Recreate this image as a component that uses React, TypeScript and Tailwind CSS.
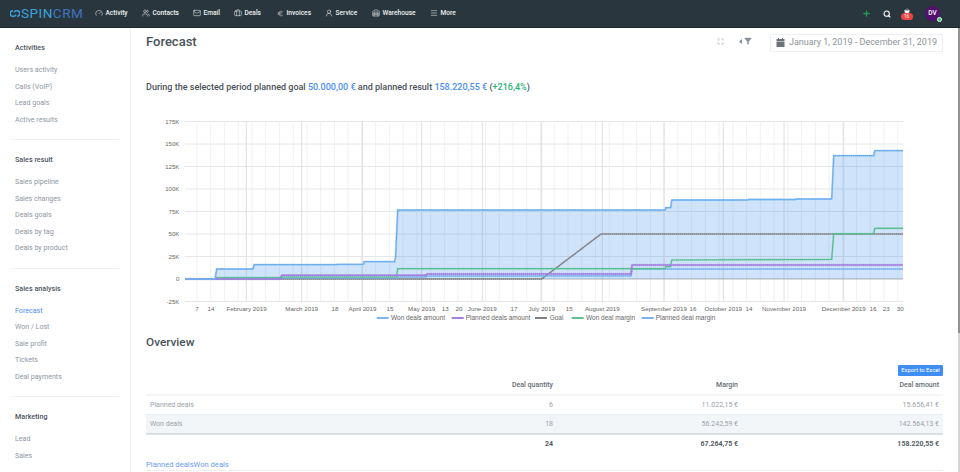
import React from "react";
import { Gauge, Users, Mail, Briefcase, Euro, UserRound, Warehouse, Menu, Plus, Search, ShoppingBasket, Maximize, Filter } from "lucide-react";

const X0 = 185;
const X1 = 903;
const TOP = 121.5;
const STEP = 22.5;

type P = [number, number];
const won: P[] = [[185,279],[215,279],[216.7,269],[252.7,269],[254.3,264.7],[336.7,264.7],[337,264.3],[363.3,264.3],[364.3,261.7],[394.5,261.7],[395.5,258],[397.7,210],[665,210],[666,207.7],[670.7,207.7],[671.7,200],[748,200],[748.5,199.5],[795,199.5],[795.5,199],[831.7,199],[833.7,155.7],[873.7,155.7],[874.7,150.7],[903,150.7]];
const margin: P[] = [[185,279],[216,279],[217,277.6],[281,277.6],[281.5,277],[396.5,277],[397.7,268.7],[665,268.7],[666,266.6],[670.7,266.6],[671.7,260],[831.7,259.5],[833.7,233.7],[873.7,233.7],[874.7,228.3],[903,228.3]];
const planned: P[] = [[185,279],[281,279],[281.5,275.3],[426,275.3],[426.7,274],[631,274],[632,265],[903,265]];
const plannedMargin: P[] = [[185,279],[281,279],[281.5,278],[397,278],[397.5,277],[426,277],[426.7,276],[631,276],[632,269],[903,269]];
const goal: P[] = [[185,279],[541.7,279],[601,234],[903,234]];

const pts = (p: P[]) => p.map((a) => a.join(",")).join(" ");
const months = [246.3, 301.7, 362.3, 421.7, 482.3, 541.7, 602.3, 664, 723.3, 784, 843.7];
const weeks = Array.from({ length: 52 }, (_, i) => 197 + i * 13.74);
const yLabels = ["175K", "150K", "125K", "100K", "75K", "50K", "25K", "0", "-25K"];
const xLabels: [string, number][] = [["7",197],["14",211],["February 2019",246.5],["March 2019",301.7],["18",335],["April 2019",362.5],["15",390],["May 2019",421.7],["13",445.3],["20",459],["June 2019",482.3],["17",514],["July 2019",541.7],["15",569.3],["August 2019",602.3],["September 2019",664],["16",693],["October 2019",723.3],["14",749],["November 2019",784],["December 2019",843.7],["16",873],["23",886.3],["30",900.3]];
const legend: [string, string, number, number][] = [["Won deals amount","#7ab6ee",376.7,391],["Planned deals amount","#a47fe0",451.7,465.7],["Goal","#808080",535,549.7],["Won deal margin","#5cc296",571.7,586],["Planned deal margin","#7ab6ee",641.7,655.7]];

function Series({ p, c, w }: { p: P[]; c: string; w: number }) {
  return (
    <g fill="none" stroke={c}>
      <polyline points={pts(p)} strokeWidth={w * 0.7} />
      <polyline points={pts(p)} strokeWidth={w * 1.15} strokeDasharray="1 1" strokeOpacity="0.6" />
    </g>
  );
}

function Chart() {
  const chartFont = { fontFamily: '"Liberation Sans", Arial, sans-serif' };
  return (
    <svg width="956" height="220" viewBox="0 110 956 220" className="block absolute left-0 top-[110px]" style={chartFont}>
      {weeks.filter((x) => x < X1).map((x) => (
        <line key={x} x1={x} x2={x} y1={TOP} y2={TOP + STEP * 8} stroke="#f1f1f1" strokeWidth="1" />
      ))}
      {months.map((x) => (
        <line key={x} x1={x} x2={x} y1={TOP} y2={TOP + STEP * 8} stroke="#dedede" strokeWidth="1" />
      ))}
      {yLabels.map((l, i) => (
        <g key={l}>
          <line x1={X0} x2={X1} y1={TOP + i * STEP} y2={TOP + i * STEP} stroke={l === "0" ? "#b0b0b0" : "#e6e6e6"} strokeWidth="1" />
          <text x={179.3} y={TOP + i * STEP + 2.2} textAnchor="end" fontSize="6" fill="#666666">{l}</text>
        </g>
      ))}
      {xLabels.map(([l, x], i) => (
        <text key={i} x={x} y={310.5} textAnchor="middle" fontSize="6.2" fill="#666666">{l}</text>
      ))}
      <polygon points={`${pts(won)} 903,279`} fill="#2f86e8" fillOpacity="0.23" />
      <Series p={goal} c="#7d7d7d" w={1.6} />
      <Series p={plannedMargin} c="#6aaeea" w={1.7} />
      <Series p={margin} c="#56bf90" w={1.7} />
      <Series p={planned} c="#a47fe0" w={2.1} />
      <Series p={won} c="#6fb0ee" w={1.9} />
      {legend.map(([l, c, lx, tx]) => (
        <g key={l}>
          <line x1={lx} x2={lx + 12} y1={318} y2={318} stroke={c} strokeWidth="2" />
          <text x={tx} y={320} fontSize="6.5" fill="#666666">{l}</text>
        </g>
      ))}
    </svg>
  );
}

const nav: [React.ElementType, string, string, number][] = [
  [Gauge, "Activity", "w-[47px]", 8],
  [Users, "Contacts", "w-[51px]", 8],
  [Mail, "Email", "w-[41px]", 8],
  [Briefcase, "Deals", "w-[43px]", 8],
  [Euro, "Invoices", "w-[48px]", 7],
  [UserRound, "Service", "w-[47px]", 8],
  [Warehouse, "Warehouse", "w-[58px]", 8],
  [Menu, "More", "w-[30px]", 8],
];

const side: { title: string; items: string[] }[] = [
  { title: "Activities", items: ["Users activity", "Calls (VoIP)", "Lead goals", "Active results"] },
  { title: "Sales result", items: ["Sales pipeline", "Sales changes", "Deals goals", "Deals by tag", "Deals by product"] },
  { title: "Sales analysis", items: ["Forecast", "Won / Lost", "Sale profit", "Tickets", "Deal payments"] },
  { title: "Marketing", items: ["Lead", "Sales"] },
];

const rows = [
  ["Planned deals", "6", "11.022,15 €", "15.656,41 €"],
  ["Won deals", "18", "56.242,59 €", "142.564,13 €"],
];

export default function App() {
  return (
    <div className="relative w-[960px] h-[472px] overflow-hidden bg-white font-['Roboto',sans-serif] flex flex-col">
      <header className="h-7 shrink-0 bg-[#2a363d] flex items-center border-b border-[#1f282e] pl-[10px] pr-[20px] text-white">
        <div className="w-[85px] flex items-center text-[13.5px] font-normal tracking-[0.5px] leading-none">
          <svg width="10" height="9" viewBox="0 0 20 18" className="mr-[1px]">
            <path d="M6 3.5a5.5 5.5 0 1 0 0 11h3l3-3M14 14.5a5.5 5.5 0 1 0 0-11h-3l-3 3" fill="none" stroke="#3aa0dc" strokeWidth="3" />
          </svg>
          <span className="text-[#3aa3dc]">SPIN</span>
          <span className="text-[#3f72c0]">CRM</span>
        </div>
        <nav className="flex items-center">
          {nav.map(([I, l, w, s]) => (
            <div key={l} className={`${w} flex items-center gap-[2.5px] text-[6.6px] font-medium text-[#eef1f2]`}>
              <I size={s} strokeWidth={1.6} className="shrink-0" />
              <span>{l}</span>
            </div>
          ))}
        </nav>
        <div className="ml-auto flex items-center">
          <Plus size={9} strokeWidth={3.5} className="text-[#1f9d55] mr-[12px]" />
          <Search size={8} strokeWidth={3.2} className="text-white mr-[10px]" />
          <div className="relative w-[12px] h-[10px] mr-[12.5px] mt-[2px]">
            <ShoppingBasket size={6} className="absolute left-[3px] top-[-2px] text-white" fill="white" />
            <span className="absolute left-0 top-[3px] w-[12px] h-[7px] rounded-full bg-[#ef4444] text-[4.5px] leading-[7px] text-center text-white">16</span>
          </div>
          <div className="relative w-[15px] h-[15px] rounded-full bg-[#54106e] text-[6.5px] font-medium leading-[15px] text-center text-white">
            DV
            <span className="absolute right-[-2px] bottom-[-1px] w-[5px] h-[5px] rounded-full bg-[#22c55e] border border-white"></span>
          </div>
        </div>
      </header>
      <div className="flex-1 flex min-h-0">
        <aside className="w-[131px] shrink-0 border-r border-[#eef0f2] pl-[11px] pr-[11px] pt-[14px]">
          {side.map((g, i) => (
            <section key={g.title} className={i < 3 ? "border-b border-[#eef0f2] pb-[11px] mb-[14px]" : ""}>
              <h3 className="pl-[4px] text-[7.2px] leading-[12px] font-medium text-[#4d5560] mb-[8px]">{g.title}</h3>
              {g.items.map((t) => (
                <div key={t} className={`pl-[4px] text-[7.1px] leading-[16.5px] ${t === "Forecast" ? "text-[#4a8ef5]" : "text-[#8f97a3]"}`}>{t}</div>
              ))}
            </section>
          ))}
        </aside>
        <main className="flex-1 min-w-0 pl-[15px] pr-[17px]">
          <div className="flex items-center h-[26px]">
            <h1 className="text-[13px] font-medium text-[#4a5259] leading-none">Forecast</h1>
            <div className="ml-auto flex items-center text-[#9aa1a9]">
              <Maximize size={7} strokeWidth={2} className="mr-[15px]" />
              <svg width="3" height="5" viewBox="0 0 3 5" className="mr-[2px]"><path d="M3 0v5L0 2.5z" fill="#8a9199" /></svg>
              <Filter size={8} fill="#8a9199" strokeWidth={1} className="mr-[18px] text-[#8a9199]" />
              <div className="flex items-center gap-[4px] h-[18px] border border-[#eef0f2] px-[5px] text-[9px] text-[#8d949c] mt-[3px]">
                <svg width="9" height="9" viewBox="0 0 9 9">
                  <path d="M2 0h1v1h3V0h1v1h1.5v2H.5V1H2zM.5 3.6h8V9h-8z" fill="#6b747c" />
                </svg>
                <span>January 1, 2019 - December 31, 2019</span>
              </div>
            </div>
          </div>
          <p className="mt-[27px] text-[9px] leading-[12px] font-medium text-[#4a5259]">
            During the selected period planned goal <span className="text-[#4a8ef5]">50.000,00 €</span> and planned result <span className="text-[#4a8ef5]">158.220,55 €</span> (<span className="text-[#22b573]">+216,4%</span>)
          </p>
          <div className="h-[241px]"></div>
          <h2 className="text-[11.8px] leading-[16px] font-medium text-[#4a5259]">Overview</h2>
          <div className="flex justify-end mt-[15px]">
            <button className="h-[11px] w-[45px] rounded-[1px] bg-[#3f8ef5] text-[5.8px] leading-[11px] text-white">Export to Excel</button>
          </div>
          <table className="w-full text-[7px] table-fixed border-collapse">
            <thead>
              <tr className="h-[19px] border-b-2 border-[#f3f5f7] text-[#666d75] font-medium">
                <th className="w-[130px]"></th>
                <th className="w-[277px] text-right font-medium">Deal quantity</th>
                <th className="text-right font-medium">Margin</th>
                <th className="w-[205px] text-right font-medium pr-[4px]">Deal amount</th>
              </tr>
            </thead>
            <tbody className="text-[#9aa1a9]">
              {rows.map((r, i) => (
                <tr key={r[0]} className={`h-[19.5px] border-b border-[#edf0f3] ${i === 1 ? "bg-[#f3f6f9]" : ""}`}>
                  <td className="pl-[4px]">{r[0]}</td>
                  <td className="text-right">{r[1]}</td>
                  <td className="text-right">{r[2]}</td>
                  <td className="text-right pr-[4px]">{r[3]}</td>
                </tr>
              ))}
              <tr className="h-[20px] border-t-2 border-[#dcdfe2] font-bold text-[#555c64]">
                <td></td>
                <td className="text-right">24</td>
                <td className="text-right">67.264,75 €</td>
                <td className="text-right pr-[4px]">158.220,55 €</td>
              </tr>
            </tbody>
          </table>
          <div className="mt-[6px] h-[11px] border-b border-[#edf0f3] text-[7.6px] leading-[10px] text-[#6a9cf5]">Planned dealsWon deals</div>
        </main>
      </div>
      <Chart />
      <div className="absolute right-0 top-[28px] bottom-0 w-[2px] bg-[#d3d6d9]">
        <div className="h-[305px] bg-[#8f9396]"></div>
      </div>
    </div>
  );
}
